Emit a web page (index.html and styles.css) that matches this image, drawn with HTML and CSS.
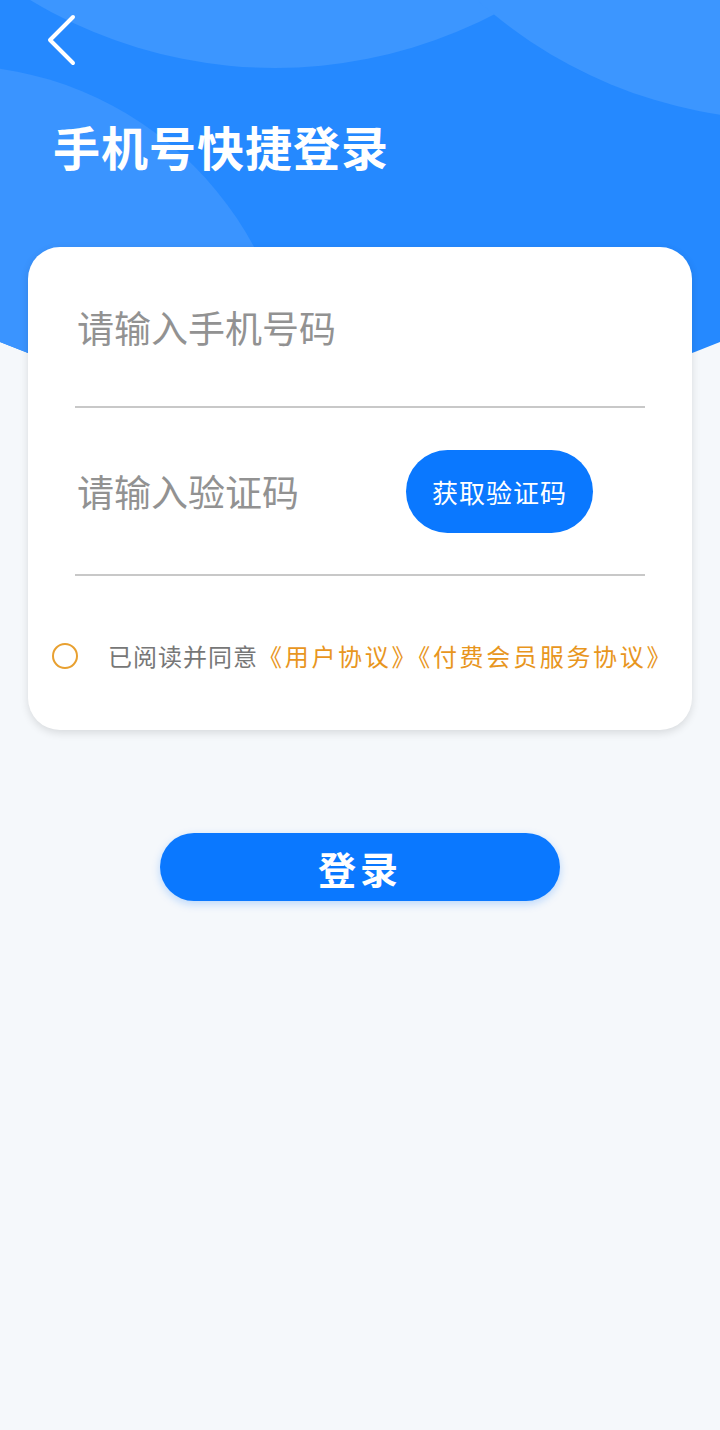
FILE: index.html
```html
<!DOCTYPE html>
<html lang="zh-CN">
<head>
  <meta charset="UTF-8" />
  <meta name="viewport" content="width=device-width, initial-scale=1.0" />
  <title>手机号快捷登录</title>
  <link rel="stylesheet" href="styles.css">
</head>
<body>
  <div class="page">
    <div class="hero">
      <svg class="hero-bg" width="720" height="420" viewBox="0 0 720 420">
        <defs>
          <clipPath id="hero-clip">
            <path d="M0 0 H720 V342 Q360 490 0 342 Z" />
          </clipPath>
        </defs>
        <g clip-path="url(#hero-clip)">
          <rect width="720" height="420" fill="#2589ff" />
          <circle cx="275" cy="-407" r="475" fill="#3c96ff" />
          <circle cx="790" cy="-348" r="468" fill="#3c96ff" />
          <circle cx="-50" cy="410" r="345" fill="#3a94ff" />
        </g>
      </svg>
      <button class="back" aria-label="返回">
        <svg width="40" height="56" viewBox="0 0 40 56">
          <polyline points="31,6 8,29 31,52" fill="none" stroke="#fff" stroke-width="4" stroke-linecap="round" stroke-linejoin="round" />
        </svg>
      </button>
      <h1 class="title">手机号快捷登录</h1>
    </div>

    <div class="card">
      <div class="field">
        <input type="tel" placeholder="请输入手机号码" />
      </div>
      <div class="field">
        <input type="text" placeholder="请输入验证码" />
        <button class="code-btn">获取验证码</button>
      </div>
      <div class="agree">
        <span class="radio"></span>
        <span class="agree-text">已阅读并同意<span class="link">《用户协议》</span><span class="link">《付费会员服务协议》</span></span>
      </div>
    </div>

    <button class="login-btn">登录</button>
  </div>
</body>
</html>
```

FILE: styles.css
```css
* {
  box-sizing: border-box;
  margin: 0;
  padding: 0;
  font-family: 'Noto Sans CJK SC', 'Noto Sans', sans-serif;
}

body {
  background-color: #f5f8fb;
  width: 720px;
  min-height: 1430px;
}

.page {
  display: flex;
  flex-direction: column;
  align-items: center;
}

.hero {
  position: relative;
  width: 100%;
  height: 247px;
}

.hero-bg {
  position: absolute;
  top: 0;
  left: 0;
  z-index: 0;
}

.back {
  position: relative;
  display: block;
  margin: 11px 0 0 42px;
  background: none;
  border: none;
  width: 40px;
  height: 56px;
  cursor: pointer;
}

.title {
  position: relative;
  margin: 47px 0 0 53px;
  color: #fff;
  font-size: 47px;
  font-weight: 700;
  line-height: 64px;
  letter-spacing: 1px;
}

.card {
  position: relative;
  z-index: 1;
  width: 664px;
  background-color: #fff;
  border-radius: 32px;
  padding: 0 47px;
  box-shadow: 0 3px 8px rgba(0, 0, 0, 0.12);
}

.field {
  display: flex;
  align-items: center;
  height: 161px;
  border-bottom: 2px solid #c8c8c8;
}

.field + .field {
  height: 168px;
}

.field input {
  flex: 1;
  min-width: 0;
  border: none;
  outline: none;
  background: none;
  font-size: 37px;
  color: #333;
  padding-left: 2px;
}

.field input::placeholder {
  color: #929292;
}

.code-btn {
  width: 187px;
  height: 83px;
  margin-right: 52px;
  border: none;
  border-radius: 42px;
  background-color: #0a78ff;
  color: #fff;
  font-size: 26px;
  letter-spacing: 1px;
  cursor: pointer;
}

.agree {
  display: flex;
  align-items: center;
  margin: 0 -23px;
  padding: 56px 0 50px;
}

.radio {
  width: 26px;
  height: 26px;
  border: 2px solid #e8a030;
  border-radius: 50%;
  flex-shrink: 0;
}

.agree-text {
  margin-left: 30px;
  font-size: 24px;
  line-height: 48px;
  letter-spacing: 1px;
  color: #777;
  white-space: nowrap;
}

.link {
  color: #e8961e;
  letter-spacing: 2.7px;
}

.login-btn {
  margin-top: 103px;
  width: 400px;
  height: 68px;
  border: none;
  border-radius: 34px;
  background-color: #0a78ff;
  color: #fff;
  font-size: 38px;
  font-weight: 700;
  letter-spacing: 4px;
  box-shadow: 0 3px 8px rgba(10, 120, 255, 0.25);
  cursor: pointer;
}
```
